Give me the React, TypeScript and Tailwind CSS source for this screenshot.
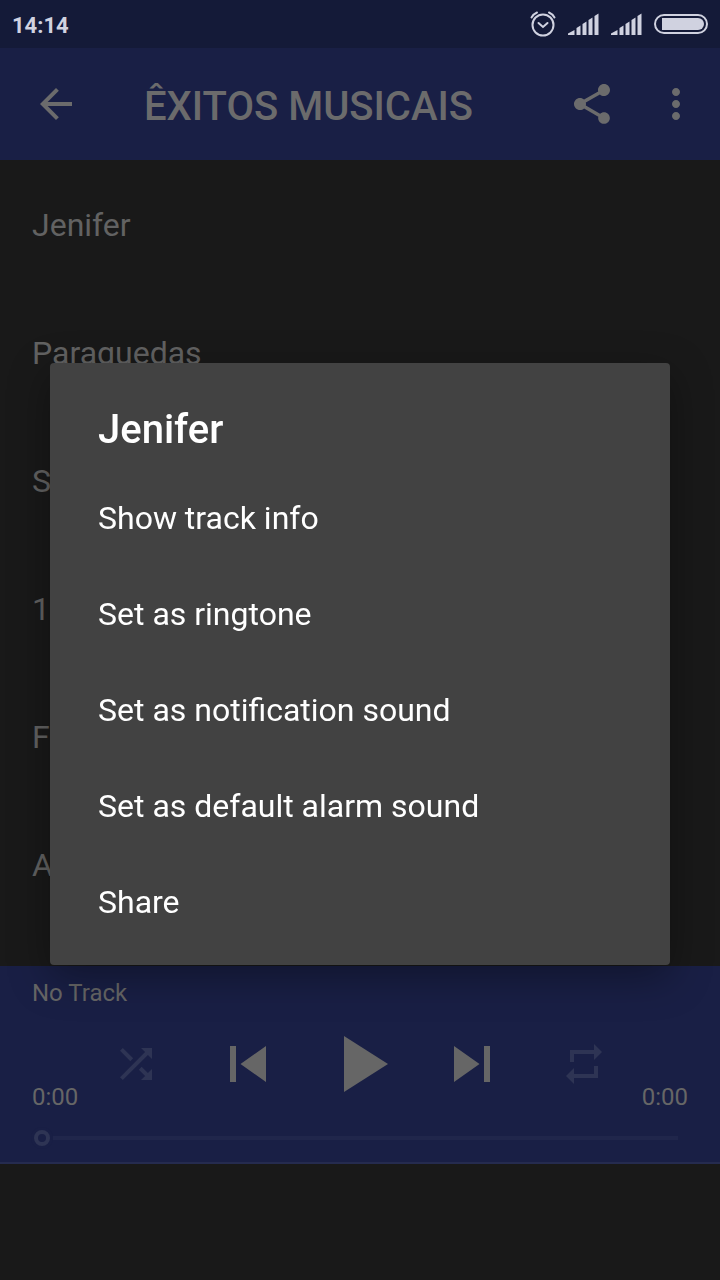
const tracks = ["Jenifer", "Paraguedas", "S", "1", "F", "A"];

const actions = [
  "Show track info",
  "Set as ringtone",
  "Set as notification sound",
  "Set as default alarm sound",
  "Share",
];

function Icon({ d, className }: { d: string; className: string }) {
  return (
    <svg viewBox="0 0 24 24" fill="currentColor" className={className} aria-hidden="true">
      <path d={d} />
    </svg>
  );
}

function AlarmIcon() {
  return (
    <svg viewBox="0 0 26 26" className="size-[26px]" fill="none" stroke="currentColor" strokeWidth="2" strokeLinecap="round" aria-hidden="true">
      <circle cx="13" cy="14" r="10.5" />
      <path d="M8.500 12l4.500 4 4.500-4" />
      <path d="M1.500 6.500Q3.500 3 7 1.500M24.500 6.500Q22.500 3 19 1.500" />
    </svg>
  );
}

function SignalIcon() {
  return (
    <svg viewBox="0 0 31 22" className="h-[22px] w-[31px]" fill="currentColor" aria-hidden="true">
      <path d="M0 22v-1.500l6.500-3.500v5zM8.500 22v-7l4-2.500V22zM14.500 22V11l4-2.500V22zM20.500 22V7l4-2.500V22zM26.500 22V3l4-2.500V22z" />
    </svg>
  );
}

function BatteryIcon() {
  return (
    <svg viewBox="0 0 54 20" className="h-5 w-[54px]" fill="none" aria-hidden="true">
      <rect x="1" y="1" width="52" height="18" rx="9" stroke="currentColor" strokeWidth="2" />
      <path d="M8 4h36a6 6 0 0 1 0 12H8z" fill="currentColor" />
    </svg>
  );
}

function StatusBar() {
  return (
    <div className="flex h-12 shrink-0 items-center justify-between bg-[#141a38] px-3 text-[#d0d2e0]">
      <span className="pt-0.5 text-[22px] font-bold">14:14</span>
      <div className="flex items-center gap-3">
        <AlarmIcon />
        <SignalIcon />
        <SignalIcon />
        <BatteryIcon />
      </div>
    </div>
  );
}

function Toolbar() {
  return (
    <header className="flex h-28 shrink-0 items-center bg-[#191f45] pr-5 pl-8 text-[#6b6b6c]">
      <button aria-label="Back">
        <Icon className="size-12" d="M20 11H7.830l5.590-5.590L12 4l-8 8 8 8 1.410-1.410L7.830 13H20v-2z" />
      </button>
      <h1 className="flex-1 pt-1.5 pl-16 text-[40px] font-medium">ÊXITOS MUSICAIS</h1>
      <button aria-label="Share playlist">
        <Icon
          className="size-12"
          d="M18 16.080c-.76 0-1.440.3-1.960.77L8.910 12.700c.05-.23.09-.46.09-.7s-.04-.47-.09-.7l7.050-4.110c.54.5 1.250.81 2.040.81 1.660 0 3-1.340 3-3s-1.340-3-3-3-3 1.340-3 3c0 .24.04.47.09.7L8.040 9.810C7.500 9.310 6.790 9 6 9c-1.660 0-3 1.340-3 3s1.340 3 3 3c.79 0 1.500-.31 2.040-.81l7.120 4.160c-.05.21-.08.43-.08.65 0 1.610 1.310 2.920 2.920 2.920s2.920-1.310 2.920-2.920-1.310-2.920-2.920-2.920z"
        />
      </button>
      <button aria-label="More options" className="ml-9">
        <Icon
          className="size-12"
          d="M12 8c1.100 0 2-.9 2-2s-.9-2-2-2-2 .9-2 2 .9 2 2 2zm0 2c-1.100 0-2 .9-2 2s.9 2 2 2 2-.9 2-2-.9-2-2-2zm0 6c-1.100 0-2 .9-2 2s.9 2 2 2 2-.9 2-2-.9-2-2-2z"
        />
      </button>
    </header>
  );
}

function Player() {
  return (
    <section className="shrink-0 border-b-2 border-[#252b4f] bg-[#191f45] px-8 pt-[13px] text-2xl text-[#666666]">
      <p className="leading-7">No Track</p>
      <div className="mt-[9px] flex h-24 items-center">
        <span className="w-12 self-end pb-px leading-7">0:00</span>
        <button aria-label="Shuffle" className="flex flex-1 justify-center text-[#2e3454]">
          <Icon
            className="size-12"
            d="M10.590 9.170L5.410 4 4 5.410l5.170 5.170 1.420-1.410zM14.500 4l2.040 2.040L4 18.590 5.410 20 17.960 7.460 20 9.500V4h-5.500zm.33 9.410l-1.410 1.410 3.130 3.130L14.500 20H20v-5.500l-2.040 2.040-3.130-3.130z"
          />
        </button>
        <button aria-label="Previous" className="flex flex-1 justify-center">
          <Icon className="size-18" d="M6 6h2v12H6zm3.500 6l8.500 6V6z" />
        </button>
        <button aria-label="Play" className="flex flex-1 justify-center">
          <Icon className="size-24" d="M8 5v14l11-7z" />
        </button>
        <button aria-label="Next" className="flex flex-1 justify-center">
          <Icon className="size-18" d="M6 18l8.500-6L6 6v12zM16 6v12h2V6h-2z" />
        </button>
        <button aria-label="Repeat" className="flex flex-1 justify-center text-[#2e3454]">
          <Icon className="size-12" d="M7 7h10v3l4-4-4-4v3H5v6h2V7zm10 10H7v-3l-4 4 4 4v-3h12v-6h-2v4z" />
        </button>
        <span className="w-12 self-end pb-px text-right leading-7">0:00</span>
      </div>
      <div className="flex h-[50px] items-center pt-0.5 pr-2.5 pl-0.5">
        <input
          type="range"
          aria-label="Position"
          defaultValue={0}
          className="h-4 w-full appearance-none bg-transparent [&::-webkit-slider-runnable-track]:h-1 [&::-webkit-slider-runnable-track]:bg-[#20264b] [&::-webkit-slider-thumb]:-mt-1.5 [&::-webkit-slider-thumb]:size-4 [&::-webkit-slider-thumb]:appearance-none [&::-webkit-slider-thumb]:rounded-full [&::-webkit-slider-thumb]:border-4 [&::-webkit-slider-thumb]:border-[#2e3454] [&::-webkit-slider-thumb]:bg-[#191f45] [&::-webkit-slider-thumb]:shadow-[0_0_0_3px_#191f45]"
        />
      </div>
    </section>
  );
}

function TrackMenu() {
  return (
    <div className="fixed inset-x-0 top-12 bottom-0 flex items-center px-[50px]">
      <div
        role="dialog"
        aria-labelledby="track-title"
        className="w-full rounded-sm bg-[#424242] pt-[43px] pb-[15px] text-white shadow-[0_12px_40px_rgba(0,0,0,0.35)]"
      >
        <h2 id="track-title" className="mb-4 px-12 text-[40px] leading-12 font-medium">
          Jenifer
        </h2>
        {actions.map((action) => (
          <button key={action} className="block h-24 w-full px-12 text-left text-[32px]">
            {action}
          </button>
        ))}
      </div>
    </div>
  );
}

export default function App() {
  return (
    <div className="flex h-screen flex-col bg-[#191919] font-['Roboto',sans-serif]">
      <StatusBar />
      <Toolbar />
      <ul className="min-h-0 flex-1 overflow-hidden pt-px text-[32px] text-[#626262]">
        {tracks.map((track) => (
          <li key={track} className="flex h-32 items-center px-8">
            {track}
          </li>
        ))}
      </ul>
      <Player />
      <div className="h-29 shrink-0" />
      <TrackMenu />
    </div>
  );
}
